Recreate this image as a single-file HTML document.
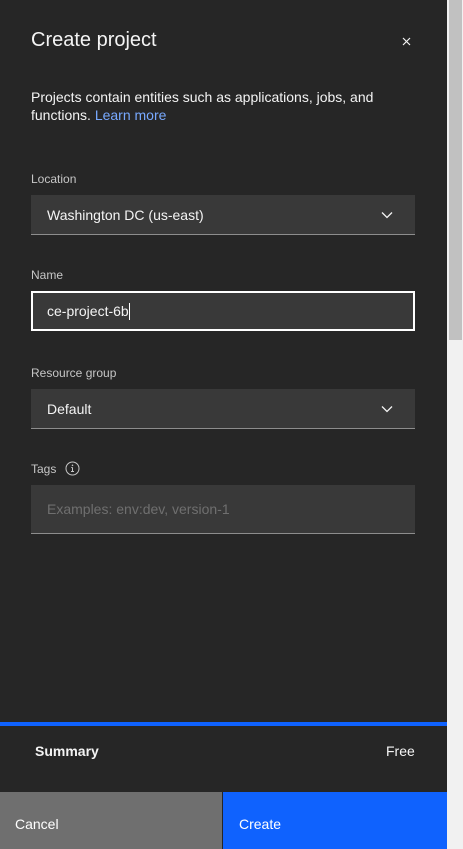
<!DOCTYPE html>
<html><head><style>
*{margin:0;padding:0;box-sizing:border-box}
body{width:463px;height:849px;background:#262626;font-family:"Liberation Sans",sans-serif;position:relative;overflow:hidden;color:#f4f4f4}
.a{position:absolute}
.lbl{font-size:12px;color:#c6c6c6;left:31px}
.fld{left:31px;width:384px;background:#393939;border-bottom:1px solid #8d8d8d;font-size:14px;padding-left:16px;display:flex;align-items:center}
.chev{position:absolute;right:22px;top:50%;margin-top:-4px}
</style></head><body>
<div class="a" style="left:447px;top:0;width:16px;height:849px;background:#f1f1f1"></div>
<div class="a" style="left:449px;top:0;width:13px;height:340px;background:#c1c1c1"></div>
<div class="a" style="left:31px;top:29px;font-size:20px;color:#f4f4f4">Create project</div>
<svg class="a" style="left:402px;top:37px" width="9" height="9" viewBox="0 0 9 9"><path d="M1 1l7 7M8 1l-7 7" stroke="#f4f4f4" stroke-width="1.2"/></svg>
<div class="a" style="left:31px;top:88px;width:390px;font-size:14px;line-height:18px">Projects contain entities such as applications, jobs, and functions. <span style="color:#78a9ff">Learn more</span></div>
<div class="a lbl" style="top:172px">Location</div>
<div class="a fld" style="top:195px;height:40px">Washington DC (us-east)<svg class="chev" width="12" height="8" viewBox="0 0 12 8"><path d="M1 1.5l5 5 5-5" stroke="#f4f4f4" stroke-width="1.3" fill="none"/></svg></div>
<div class="a lbl" style="top:268px">Name</div>
<div class="a fld" style="top:291px;height:40px;border:2px solid #fff;padding-left:14px">ce-project-6b<span style="display:inline-block;width:1px;height:17px;background:#fff"></span></div>
<div class="a lbl" style="top:366px">Resource group</div>
<div class="a fld" style="top:389px;height:40px">Default<svg class="chev" width="12" height="8" viewBox="0 0 12 8"><path d="M1 1.5l5 5 5-5" stroke="#f4f4f4" stroke-width="1.3" fill="none"/></svg></div>
<div class="a lbl" style="top:462px">Tags</div>
<svg class="a" style="left:65px;top:461px" width="15" height="15" viewBox="0 0 15 15"><circle cx="7.5" cy="7.5" r="6.5" stroke="#c6c6c6" fill="none"/><path d="M7.5 6.5v4M6 10.5h3M6.3 6.5h1.2" stroke="#c6c6c6"/><circle cx="7.5" cy="4.3" r=".8" fill="#c6c6c6"/></svg>
<div class="a fld" style="top:485px;height:49px;color:#6f6f6f">Examples: env:dev, version-1</div>
<div class="a" style="left:0;top:722px;width:447px;height:4px;background:#0f62fe"></div>
<div class="a" style="left:35px;top:743px;font-size:14px;font-weight:bold">Summary</div>
<div class="a" style="left:386px;top:743px;font-size:14px">Free</div>
<div class="a" style="left:0;top:792px;width:222px;height:57px;background:#6f6f6f"></div>
<div class="a" style="left:223px;top:792px;width:224px;height:57px;background:#0f62fe"></div>
<div class="a" style="left:15px;top:816px;font-size:14px;color:#fff">Cancel</div>
<div class="a" style="left:239px;top:816px;font-size:14px;color:#fff">Create</div>
</body></html>
